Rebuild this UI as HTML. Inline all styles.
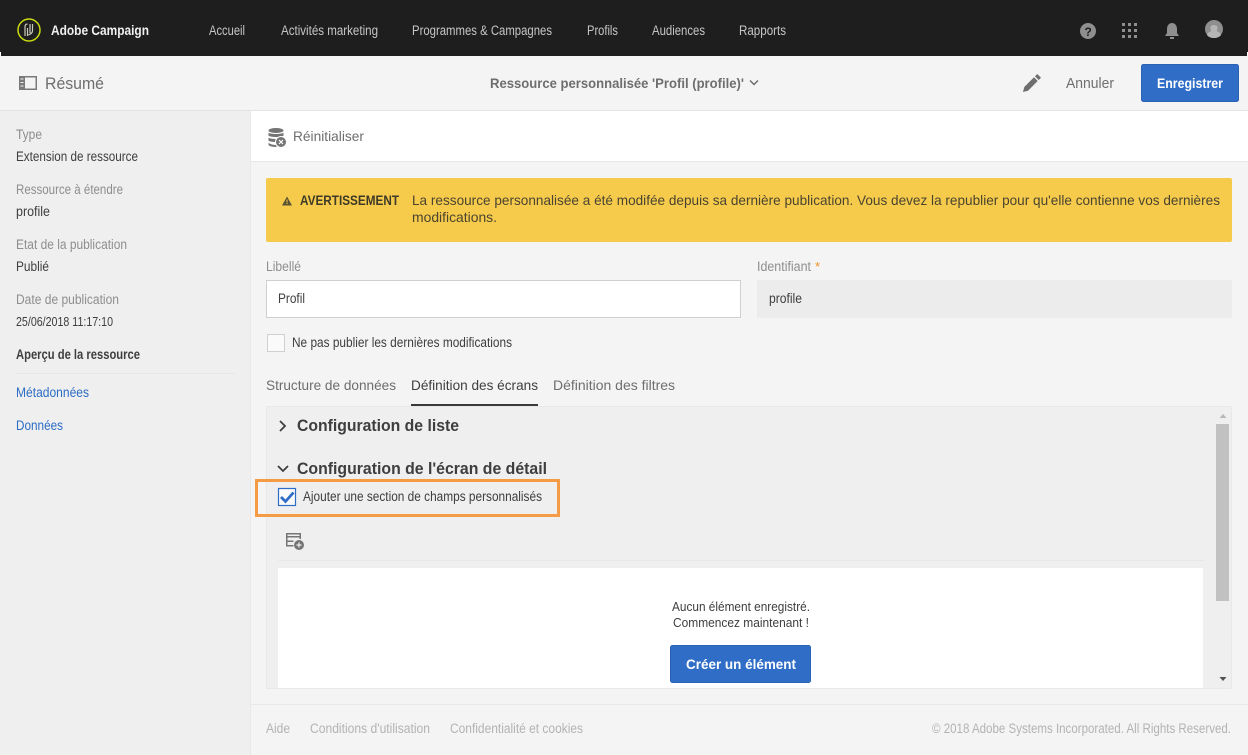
<!DOCTYPE html>
<html lang="fr">
<head>
<meta charset="utf-8">
<title>Adobe Campaign</title>
<style>
html,body{margin:0;padding:0;width:1248px;height:755px;overflow:hidden;background:#f4f4f4}
svg{display:block}
text{font-family:"Liberation Sans",sans-serif;font-size:13.5px;fill:#4b4b4b}
.n{fill:#c6c6c6;font-size:13.5px}
.l{fill:#8e8e8e;font-size:13.5px}
.v{fill:#3e3e3e;font-size:13.5px}
.b{font-weight:bold}
.a{fill:#2d6cc4;font-size:13.5px}
.f{fill:#b3b3b3;font-size:13.5px}
.h{fill:#3e3e3e;font-size:17px;font-weight:bold}
</style>
</head>
<body>
<svg width="1248" height="755" viewBox="0 0 1248 755" xmlns="http://www.w3.org/2000/svg">
<rect width="1248" height="755" fill="#f4f4f4"/>
<!-- top bar -->
<rect width="1248" height="56" fill="#1e1e1e"/>
<rect x="0" y="52" width="1" height="4" fill="#fff"/>
<rect x="1247" y="52" width="1" height="4" fill="#fff"/>
<circle cx="29" cy="30" r="11" fill="none" stroke="#cbdc10" stroke-width="1.5"/>
<path d="M25 36v-9c0-2 1-3 2.500-3M27.500 36v-8M30 33v-9M32.500 24v7c0 2-2 3-4 4" fill="none" stroke="#c9c9b8" stroke-width="1.200"/>
<text x="51" y="35" class="b" style="fill:#f0f0f0;font-size:14px" textLength="98" lengthAdjust="spacingAndGlyphs">Adobe Campaign</text>
<text x="209" y="35" class="n" textLength="36" lengthAdjust="spacingAndGlyphs">Accueil</text>
<text x="281" y="35" class="n" textLength="97" lengthAdjust="spacingAndGlyphs">Activités marketing</text>
<text x="412" y="35" class="n" textLength="140" lengthAdjust="spacingAndGlyphs">Programmes &amp; Campagnes</text>
<text x="587" y="35" class="n" textLength="31" lengthAdjust="spacingAndGlyphs">Profils</text>
<text x="652" y="35" class="n" textLength="53" lengthAdjust="spacingAndGlyphs">Audiences</text>
<text x="739" y="35" class="n" textLength="47" lengthAdjust="spacingAndGlyphs">Rapports</text>
<circle cx="1088" cy="31" r="8" fill="#8f8f8f"/>
<text x="1084.500" y="36" class="b" style="fill:#1e1e1e;font-size:12px">?</text>
<g fill="#8f8f8f">
<rect x="1122" y="23" width="3" height="3"/><rect x="1128" y="23" width="3" height="3"/><rect x="1134" y="23" width="3" height="3"/>
<rect x="1122" y="29" width="3" height="3"/><rect x="1128" y="29" width="3" height="3"/><rect x="1134" y="29" width="3" height="3"/>
<rect x="1122" y="35" width="3" height="3"/><rect x="1128" y="35" width="3" height="3"/><rect x="1134" y="35" width="3" height="3"/>
<path d="M1172 23c-3 0-5 2.500-5 6v4l-2 3h14l-2-3v-4c0-3.500-2-6-5-6z"/>
<rect x="1170" y="37" width="4" height="2"/>
<circle cx="1214" cy="29" r="9"/>
</g>
<path d="M1207 35c1-3 3.500-3.500 4.500-4-1.500-1.500-2-6 2.500-6s4 4.500 2.500 6c1 .5 3.500 1 4.500 4-1.500 2-4 3-7 3s-5.500-1-7-3z" fill="#b5b5b5"/>
<!-- subheader -->
<rect y="110" width="1248" height="1" fill="#e4e4e4"/>
<rect x="19.750" y="76.750" width="16.500" height="12.500" fill="none" stroke="#7a7a7a" stroke-width="1.500"/>
<path d="M19 76h6v14h-6z" fill="#7a7a7a"/>
<path d="M20.500 79h3M20.500 82.500h3M20.500 86h3" stroke="#f4f4f4" stroke-width="1"/>
<text x="45" y="89" style="fill:#6e6e6e;font-size:17px" textLength="59" lengthAdjust="spacingAndGlyphs">Résumé</text>
<text x="490" y="88" class="b" style="fill:#6e6e6e;font-size:14px" textLength="254" lengthAdjust="spacingAndGlyphs">Ressource personnalisée 'Profil (profile)'</text>
<path d="M750 80.500l4 4 4-4" fill="none" stroke="#6e6e6e" stroke-width="1.500"/>
<path d="M1023 92l1.300-5 9.700-9.700 3.700 3.700-9.700 9.700zM1035 76.300l2.300-2.300 3.700 3.700-2.300 2.300z" fill="#6e6e6e"/>
<text x="1066" y="88" style="fill:#6e6e6e;font-size:14.500px" textLength="48" lengthAdjust="spacingAndGlyphs">Annuler</text>
<rect x="1141.500" y="64.500" width="97" height="37" rx="2" fill="#2f6dc7" stroke="#2a62b4"/>
<text x="1157" y="88" class="b" style="fill:#fff;font-size:14px" textLength="66" lengthAdjust="spacingAndGlyphs">Enregistrer</text>
<!-- sidebar -->
<rect y="111" width="250" height="644" fill="#efefef"/>
<rect x="250" y="111" width="1" height="644" fill="#e8e8e8"/>
<text x="16" y="139" class="l" textLength="26" lengthAdjust="spacingAndGlyphs">Type</text>
<text x="16" y="161" class="v" textLength="122" lengthAdjust="spacingAndGlyphs">Extension de ressource</text>
<text x="16" y="194" class="l" textLength="107" lengthAdjust="spacingAndGlyphs">Ressource à étendre</text>
<text x="16" y="216" class="v" textLength="34" lengthAdjust="spacingAndGlyphs">profile</text>
<text x="16" y="249" class="l" textLength="111" lengthAdjust="spacingAndGlyphs">Etat de la publication</text>
<text x="16" y="271" class="v" textLength="33" lengthAdjust="spacingAndGlyphs">Publié</text>
<text x="16" y="304" class="l" textLength="103" lengthAdjust="spacingAndGlyphs">Date de publication</text>
<text x="16" y="326" class="v" style="font-size:12.500px" textLength="97" lengthAdjust="spacingAndGlyphs">25/06/2018 11:17:10</text>
<text x="16" y="359" class="v b" textLength="124" lengthAdjust="spacingAndGlyphs">Aperçu de la ressource</text>
<rect x="16" y="373" width="219" height="1" fill="#e6e6e6"/>
<text x="16" y="397" class="a" textLength="73" lengthAdjust="spacingAndGlyphs">Métadonnées</text>
<text x="16" y="430" class="a" textLength="47" lengthAdjust="spacingAndGlyphs">Données</text>
<!-- reset bar -->
<rect x="251" y="111" width="997" height="50" fill="#fff"/>
<rect x="251" y="161" width="997" height="1" fill="#e8e8e8"/>
<g fill="#757575">
<ellipse cx="276" cy="130.500" rx="7.500" ry="2.500"/>
<path d="M268.500 132.500c1 2 14 2 15 0v3c-1 2-14 2-15 0zM268.500 137.500c1 2 14 2 15 0v3c-1 2-14 2-15 0zM268.500 142.500c1 2 6 2.500 8 2.500v2c-3 0-7-.5-8-2z"/>
<circle cx="281" cy="142" r="5.500" stroke="#fff" stroke-width="1"/>
</g>
<path d="M279 140l4 4M283 140l-4 4" stroke="#fff" stroke-width="1.200"/>
<text x="293" y="141" style="fill:#6e6e6e;font-size:14px" textLength="71" lengthAdjust="spacingAndGlyphs">Réinitialiser</text>
<!-- warning -->
<rect x="266" y="178" width="966" height="64" rx="2" fill="#f6cb4b"/>
<path d="M287 196.500l5 9h-10z" fill="#5a5233"/>
<rect x="286.500" y="199.500" width="1" height="3" fill="#f6cb4b"/><rect x="286.500" y="203" width="1" height="1" fill="#f6cb4b"/>
<text x="300" y="205" class="v b" style="fill:#3e3a28" textLength="99" lengthAdjust="spacingAndGlyphs">AVERTISSEMENT</text>
<text x="412" y="205" style="fill:#4a4430;font-size:14px" textLength="808" lengthAdjust="spacingAndGlyphs">La ressource personnalisée a été modifée depuis sa dernière publication. Vous devez la republier pour qu'elle contienne vos dernières</text>
<text x="412" y="222" style="fill:#4a4430;font-size:14px" textLength="85" lengthAdjust="spacingAndGlyphs">modifications.</text>
<!-- fields -->
<text x="266" y="271" class="l" textLength="35" lengthAdjust="spacingAndGlyphs">Libellé</text>
<rect x="266.500" y="280.500" width="474" height="37" fill="#fff" stroke="#cfcfcf"/>
<text x="278" y="303" class="v" textLength="27" lengthAdjust="spacingAndGlyphs">Profil</text>
<text x="757" y="271" class="l" textLength="54" lengthAdjust="spacingAndGlyphs">Identifiant</text>
<text x="815" y="271" style="fill:#f29423;font-size:13px">*</text>
<rect x="757" y="280" width="475" height="38" fill="#ececec"/>
<text x="769" y="303" class="v" textLength="33" lengthAdjust="spacingAndGlyphs">profile</text>
<rect x="267.500" y="334.500" width="17" height="17" fill="#fafafa" stroke="#d0d0d0"/>
<text x="292" y="347" class="v" textLength="220" lengthAdjust="spacingAndGlyphs">Ne pas publier les dernières modifications</text>
<!-- tabs -->
<text x="266" y="390" style="fill:#6e6e6e;font-size:14px" textLength="130" lengthAdjust="spacingAndGlyphs">Structure de données</text>
<text x="411" y="390" style="fill:#3e3e3e;font-size:14px" textLength="127" lengthAdjust="spacingAndGlyphs">Définition des écrans</text>
<text x="553" y="390" style="fill:#6e6e6e;font-size:14px" textLength="122" lengthAdjust="spacingAndGlyphs">Définition des filtres</text>
<!-- panel -->
<rect x="266.500" y="406.500" width="965" height="282" rx="1" fill="#efefef" stroke="#e8e8e8"/>
<rect x="411" y="404" width="127" height="2" fill="#3a3a3a"/>
<path d="M280 421l5 5-5 5" fill="none" stroke="#3e3e3e" stroke-width="1.800"/>
<text x="297" y="431" class="h" textLength="162" lengthAdjust="spacingAndGlyphs">Configuration de liste</text>
<path d="M278 466l5 5 5-5" fill="none" stroke="#3e3e3e" stroke-width="1.800"/>
<text x="297" y="474" class="h" textLength="250" lengthAdjust="spacingAndGlyphs">Configuration de l'écran de détail</text>
<rect x="256.500" y="480.500" width="302" height="35" fill="none" stroke="#f59a45" stroke-width="3"/>
<rect x="278.500" y="488.500" width="17" height="17" fill="#fafafa" stroke="#2f6dc7" stroke-width="1.200"/>
<path d="M281 497l4.500 4.500 8-9" fill="none" stroke="#2f6dc7" stroke-width="2.800"/>
<text x="303" y="501" class="v" textLength="239" lengthAdjust="spacingAndGlyphs">Ajouter une section de champs personnalisés</text>
<g fill="#757575">
<path d="M286 533h15v6h-1.500v-1.500h-12v3h6v1.500h-6v3h6v1.500h-7.500zM287.500 534.500v1.500h12v-1.500z" fill-rule="evenodd"/>
<circle cx="299" cy="545" r="5"/>
</g>
<path d="M296.500 545h5M299 542.500v5" stroke="#efefef" stroke-width="1.200"/>
<rect x="278" y="560" width="926" height="1" fill="#e8e8e8"/>
<rect x="278" y="568" width="925" height="120" rx="1" fill="#fff"/>
<text x="672" y="611" class="v" style="font-size:12.500px" textLength="138" lengthAdjust="spacingAndGlyphs">Aucun élément enregistré.</text>
<text x="673" y="627" class="v" style="font-size:12.500px" textLength="136" lengthAdjust="spacingAndGlyphs">Commencez maintenant !</text>
<rect x="670.500" y="645.500" width="140" height="37" rx="2" fill="#2f6dc7" stroke="#2a62b4"/>
<text x="686" y="669" class="b" style="fill:#fff;font-size:14px" textLength="110" lengthAdjust="spacingAndGlyphs">Créer un élément</text>
<!-- scrollbar -->
<rect x="1216" y="424" width="13" height="177" fill="#c1c1c1"/>
<path d="M1219.500 418h7l-3.500-4z" fill="#b8b8b8"/>
<path d="M1219.500 677h7l-3.500 4z" fill="#505050"/>
<!-- footer -->
<rect x="251" y="704" width="997" height="1" fill="#e8e8e8"/>
<text x="266" y="733" class="f" textLength="24" lengthAdjust="spacingAndGlyphs">Aide</text>
<text x="310" y="733" class="f" textLength="120" lengthAdjust="spacingAndGlyphs">Conditions d'utilisation</text>
<text x="450" y="733" class="f" textLength="133" lengthAdjust="spacingAndGlyphs">Confidentialité et cookies</text>
<text x="932" y="733" class="f" textLength="299" lengthAdjust="spacingAndGlyphs">© 2018 Adobe Systems Incorporated. All Rights Reserved.</text>
</svg>
</body>
</html>
